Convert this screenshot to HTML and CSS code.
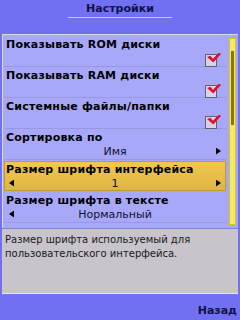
FILE: index.html
```html
<!DOCTYPE html>
<html lang="ru">
<head>
    <meta charset="UTF-8">
    <title>Настройки</title>
    <link rel="stylesheet" href="styles.css">
</head>
<body>
    <div class="screen">
        <div class="title">
            <span>Настройки</span>
            <div class="title-line"></div>
        </div>
        <div class="panel">
            <div class="list">
                <div class="item">
                    <div class="label">Показывать ROM диски</div>
                    <div class="row right"><span class="check"></span></div>
                </div>
                <div class="item">
                    <div class="label">Показывать RAM диски</div>
                    <div class="row right"><span class="check"></span></div>
                </div>
                <div class="item">
                    <div class="label">Системные файлы/папки</div>
                    <div class="row right"><span class="check"></span></div>
                </div>
                <div class="item">
                    <div class="label">Сортировка по</div>
                    <div class="row"><span class="arr"></span><span class="value">Имя</span><span class="arr r"></span></div>
                </div>
                <div class="item active">
                    <div class="label">Размер шрифта интерфейса</div>
                    <div class="row"><span class="arr l"></span><span class="value">1</span><span class="arr r"></span></div>
                </div>
                <div class="item">
                    <div class="label">Размер шрифта в тексте</div>
                    <div class="row"><span class="arr l"></span><span class="value">Нормальный</span><span class="arr"></span></div>
                </div>
            </div>
            <div class="scrollbar"><div class="thumb"></div></div>
        </div>
        <div class="help">Размер шрифта используемый для пользовательского интерфейса.</div>
        <div class="softkeys"><span>Назад</span></div>
    </div>
</body>
</html>
```

FILE: styles.css
```css
body {
    margin: 0;
    background-color: #7070f0;
    font-family: 'DejaVu Sans', sans-serif;
}
.screen {
    width: 240px;
    height: 320px;
    display: flex;
    flex-direction: column;
}
.title {
    height: 34px;
    display: flex;
    flex-direction: column;
    align-items: center;
    font-size: 11px;
    font-weight: bold;
    color: #101048;
    padding-top: 2px;
    box-sizing: border-box;
}
.title-line {
    width: 104px;
    height: 1px;
    margin-top: 2px;
    background-color: #c8c8f8;
}
.panel {
    margin: 0 2px;
    height: 193px;
    background-color: #a8a8f8;
    border-top: 1px solid #d8d8f0;
    border-left: 1px solid #d8d8f0;
    display: flex;
}
.list {
    flex: 1;
    padding-left: 1px;
    padding-top: 1px;
}
.item {
    height: 31px;
    border-bottom: 1px solid #9898e4;
    padding: 2px 2px 0 2px;
    box-sizing: border-box;
    font-size: 11px;
    color: #000;
}
.item.active {
    background: linear-gradient(#f0c850, #e0b440);
    border: 1px solid #c89830;
    height: 30px;
    margin: 1px 0 1px 0;
    padding: 1px 1px 0 1px;
}
.label {
    font-weight: bold;
    letter-spacing: 0.2px;
    height: 13px;
    line-height: 13px;
}
.row {
    display: flex;
    align-items: center;
    justify-content: space-between;
    height: 14px;
    padding: 0 3px 0 3px;
    font-size: 11px;
    color: #101030;
}
.row.right {
    justify-content: flex-end;
    padding-right: 2px;
}
.value {
    flex: 1;
    text-align: center;
}
.arr {
    width: 5px;
    height: 7px;
}
.arr.r {
    background: #000;
    clip-path: polygon(0 0, 100% 50%, 0 100%);
}
.arr.l {
    background: #000;
    clip-path: polygon(100% 0, 0 50%, 100% 100%);
}
.check {
    position: relative;
    width: 10px;
    height: 11px;
    margin-top: 4px;
    margin-right: 5px;
    background-color: #d8d4e8;
    border: 1px solid #606070;
}
.check::after {
    content: "";
    position: absolute;
    left: 1px;
    top: -2px;
    width: 14px;
    height: 10px;
    background: #e01030;
    clip-path: polygon(0 45%, 25% 32%, 42% 62%, 86% 0, 100% 15%, 45% 100%);
}
.scrollbar {
    width: 5px;
    margin: 3px 2px 3px 3px;
    background-color: #f0e870;
    border: 1px solid #d8c810;
    display: flex;
    flex-direction: column;
}
.thumb {
    margin: 12px 1px 0 1px;
    width: 3px;
    height: 74px;
    background-color: #807820;
}
.help {
    margin: 0 2px;
    height: 66px;
    background-color: #c8c4cc;
    border-top: 1px solid #8080d0;
    border-bottom: 1px solid #e8e8f8;
    box-sizing: border-box;
    padding: 4px 4px 0 3px;
    font-size: 10px;
    line-height: 14px;
    color: #181820;
}
.softkeys {
    flex: 1;
    display: flex;
    justify-content: flex-end;
    align-items: flex-end;
    padding: 0 3px 3px 0;
    font-size: 11px;
    font-weight: bold;
    color: #101048;
}
```
